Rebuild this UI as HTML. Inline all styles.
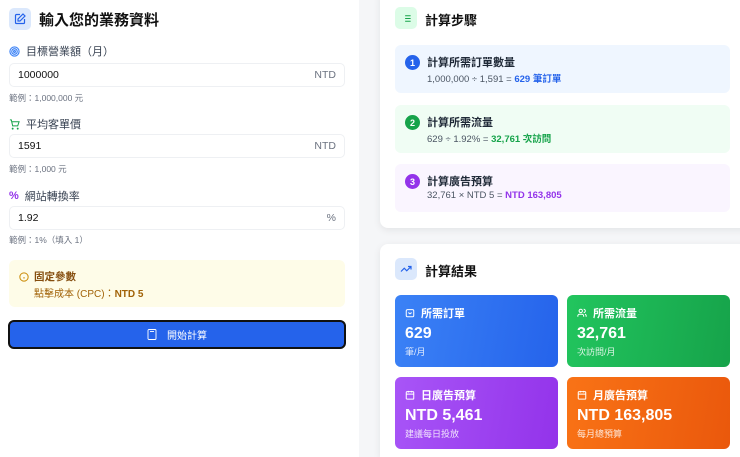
<!DOCTYPE html>
<html><head><meta charset="utf-8"><style>
*{box-sizing:border-box;margin:0;padding:0}
html,body{width:740px;height:457px;overflow:hidden}
body{background:#f5f6f8;font-family:"Liberation Sans","Noto Sans CJK TC",sans-serif;position:relative;color:#1f2937}
.abs{position:absolute}
.left{left:0;top:0;width:359px;height:457px;background:#fff}
.ib{width:22px;height:22px;border-radius:5px;display:flex;align-items:center;justify-content:center}
.lbl{font-size:11px;color:#374151;display:flex;align-items:center;gap:6px}
.inp{left:9px;width:336px;height:24px;border:1px solid #eef0f3;border-radius:5px;font-size:10.5px;display:flex;align-items:center;justify-content:space-between;padding:0 8px;color:#111}
.inp span{color:#6b7280}
.hint{font-size:8.5px;color:#6b7280;left:9px}
.card{background:#fff;border-radius:8px;box-shadow:0 2px 8px rgba(0,0,0,.08)}
.step{left:395px;width:335px;height:48px;border-radius:6px}
.num{position:absolute;left:10px;top:10px;width:15px;height:15px;border-radius:50%;color:#fff;font-size:9px;font-weight:bold;display:flex;align-items:center;justify-content:center}
.st{position:absolute;left:32px;top:9px;font-size:11px;font-weight:bold;color:#1f2937}
.sf{position:absolute;left:32px;top:26px;font-size:9.5px;color:#4b5563}
.tile{width:163px;height:72px;border-radius:6px;color:#fff}
.tile .h{position:absolute;left:10px;top:10px;font-size:11px;font-weight:bold;display:flex;align-items:center;gap:6px}
.tile .v{position:absolute;left:10px;top:30px;font-size:16px;font-weight:bold}
.tile .s{position:absolute;left:10px;top:50px;font-size:9px;opacity:.85}
</style></head><body>
<div class="abs left"></div>
<div class="abs ib" style="left:9px;top:8px;background:#dbe8fc"><svg width="12" height="12" viewBox="0 0 24 24" fill="none" stroke="#2563eb" stroke-width="2.4"><path d="M12 3H5a2 2 0 0 0-2 2v14a2 2 0 0 0 2 2h14a2 2 0 0 0 2-2v-7"/><path d="M18 2l4 4-10 10H8v-4z"/></svg></div>
<div class="abs" style="left:39px;top:9px;font-size:15px;font-weight:600;color:#111">輸入您的業務資料</div>

<div class="abs lbl" style="left:9px;top:43px"><svg width="11" height="11" viewBox="0 0 24 24" fill="none" stroke="#3b82f6" stroke-width="2.5"><circle cx="12" cy="12" r="10"/><circle cx="12" cy="12" r="6"/><circle cx="12" cy="12" r="2"/></svg>目標營業額（月）</div>
<div class="abs inp" style="top:63px">1000000<span>NTD</span></div>
<div class="abs hint" style="top:92px">範例：1,000,000 元</div>

<div class="abs lbl" style="left:9px;top:116px"><svg width="11" height="11" viewBox="0 0 24 24" fill="none" stroke="#16a34a" stroke-width="2.2"><circle cx="8" cy="21" r="1"/><circle cx="19" cy="21" r="1"/><path d="M2 2h3l3 13h11l3-9H6"/></svg>平均客單價</div>
<div class="abs inp" style="top:134px">1591<span>NTD</span></div>
<div class="abs hint" style="top:163px">範例：1,000 元</div>

<div class="abs lbl" style="left:9px;top:188px"><span style="color:#9333ea;font-size:11px;font-weight:bold">%</span>網站轉換率</div>
<div class="abs inp" style="top:206px">1.92<span>%</span></div>
<div class="abs hint" style="top:234px">範例：1%（填入 1）</div>

<div class="abs" style="left:9px;top:260px;width:336px;height:47px;background:#fefce8;border-radius:6px"></div>
<div class="abs" style="left:19px;top:269px;font-size:10.5px;font-weight:bold;color:#854d0e;display:flex;align-items:center;gap:5px"><svg width="10" height="10" viewBox="0 0 24 24" fill="none" stroke="#ca8a04" stroke-width="2.4"><circle cx="12" cy="12" r="10"/><path d="M12 16v-4M12 8h0"/></svg>固定參數</div>
<div class="abs" style="left:34px;top:285px;font-size:10px;color:#a16207">點擊成本 (CPC)：<b>NTD 5</b></div>

<div class="abs" style="left:8px;top:320px;width:338px;height:29px;background:#2563eb;border:2px solid #111;border-radius:6px;color:#fff;font-size:10px;display:flex;align-items:center;justify-content:center;gap:10px"><svg width="10" height="11" viewBox="0 0 20 22" fill="none" stroke="#fff" stroke-width="1.8"><rect x="2" y="1" width="16" height="20" rx="2"/><path d="M6 5h8M7 16h0"/></svg>開始計算</div>

<div class="abs card" style="left:380px;top:-10px;width:380px;height:238px"></div>
<div class="abs ib" style="left:395px;top:7px;background:#dcfce7"><svg width="11" height="11" viewBox="0 0 24 24" fill="none" stroke="#16a34a" stroke-width="2.4"><path d="M9 6h12M9 12h12M9 18h12M4 6h0M4 12h0M4 18h0"/></svg></div>
<div class="abs" style="left:425px;top:10px;font-size:13px;font-weight:bold;color:#111">計算步驟</div>

<div class="abs step" style="top:45px;background:#eff6ff"><div class="num" style="background:#2563eb">1</div><div class="st">計算所需訂單數量</div><div class="sf">1,000,000 ÷ 1,591 = <b style="color:#2563eb">629 筆訂單</b></div></div>
<div class="abs step" style="top:105px;background:#f0fdf4"><div class="num" style="background:#16a34a">2</div><div class="st">計算所需流量</div><div class="sf">629 ÷ 1.92% = <b style="color:#16a34a">32,761 次訪問</b></div></div>
<div class="abs step" style="top:164px;background:#faf5ff"><div class="num" style="background:#9333ea">3</div><div class="st">計算廣告預算</div><div class="sf">32,761 × NTD 5 = <b style="color:#9333ea">NTD 163,805</b></div></div>

<div class="abs card" style="left:380px;top:244px;width:380px;height:213px;border-radius:8px 0 0 0"></div>
<div class="abs ib" style="left:395px;top:258px;background:#dbe8fc"><svg width="12" height="12" viewBox="0 0 24 24" fill="none" stroke="#2563eb" stroke-width="2.4"><path d="M22 7l-8.5 8.5-5-5L2 17"/><path d="M16 7h6v6"/></svg></div>
<div class="abs" style="left:425px;top:261px;font-size:13px;font-weight:bold;color:#111">計算結果</div>

<div class="abs tile" style="left:395px;top:295px;background:linear-gradient(100deg,#3b82f6,#2563eb)"><div class="h"><svg width="10" height="10" viewBox="0 0 24 24" fill="none" stroke="#fff" stroke-width="2.4"><rect x="3" y="4" width="18" height="17" rx="3"/><path d="M8 11l4 3 4-3"/></svg>所需訂單</div><div class="v">629</div><div class="s">筆/月</div></div>
<div class="abs tile" style="left:567px;top:295px;background:linear-gradient(100deg,#22c55e,#16a34a)"><div class="h"><svg width="10" height="10" viewBox="0 0 24 24" fill="none" stroke="#fff" stroke-width="2.4"><circle cx="9" cy="7" r="4"/><path d="M2 21v-2a4 4 0 0 1 4-4h6a4 4 0 0 1 4 4v2M16 3a4 4 0 0 1 0 8M22 21v-2a4 4 0 0 0-3-4"/></svg>所需流量</div><div class="v">32,761</div><div class="s">次訪問/月</div></div>
<div class="abs tile" style="left:395px;top:377px;background:linear-gradient(100deg,#a855f7,#9333ea)"><div class="h"><svg width="10" height="10" viewBox="0 0 24 24" fill="none" stroke="#fff" stroke-width="2.4"><rect x="3" y="4" width="18" height="18" rx="2"/><path d="M16 2v4M8 2v4M3 10h18"/></svg>日廣告預算</div><div class="v">NTD 5,461</div><div class="s">建議每日投放</div></div>
<div class="abs tile" style="left:567px;top:377px;background:linear-gradient(100deg,#f97316,#ea580c)"><div class="h"><svg width="10" height="10" viewBox="0 0 24 24" fill="none" stroke="#fff" stroke-width="2.4"><rect x="3" y="4" width="18" height="18" rx="2"/><path d="M16 2v4M8 2v4M3 10h18"/></svg>月廣告預算</div><div class="v">NTD 163,805</div><div class="s">每月總預算</div></div>
</body></html>
